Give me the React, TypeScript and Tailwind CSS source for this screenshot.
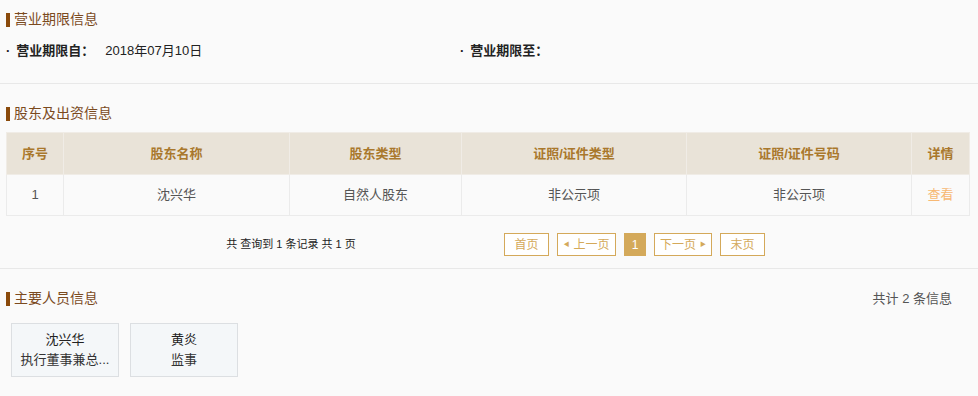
import React from "react";

const font = { fontFamily: '"Liberation Sans", "Noto Sans CJK SC", sans-serif' };

const SectionTitle: React.FC<{ title: string; right?: string }> = ({ title, right }) => (
  <div className="flex items-center justify-between pr-[26px]">
    <div className="flex items-center">
      <span className="inline-block w-[4px] h-[14px] bg-[#8a4a0b]" />
      <span className="ml-[4px] text-[14px] text-[#7b4a1e]">{title}</span>
    </div>
    {right && <span className="text-[13px] text-[#555]">{right}</span>}
  </div>
);

const columns = [
  { name: "序号", w: "w-[57px]" },
  { name: "股东名称", w: "w-[226px]" },
  { name: "股东类型", w: "w-[172px]" },
  { name: "证照/证件类型", w: "w-[225px]" },
  { name: "证照/证件号码", w: "w-[225px]" },
  { name: "详情", w: "w-[58px]" },
];

const row = ["1", "沈兴华", "自然人股东", "非公示项", "非公示项"];

const people = [
  { name: "沈兴华", role: "执行董事兼总..." },
  { name: "黄炎", role: "监事" },
];

const PageBtn: React.FC<{ children: React.ReactNode; w: string }> = ({ children, w }) => (
  <button
    className={`${w} h-[23px] border border-[#d4a95a] text-[#d4a95a] text-[12px] flex items-center justify-center bg-white`}
  >
    {children}
  </button>
);

const App: React.FC = () => {
  return (
    <div className="w-[978px] h-[396px] bg-[#fafafa] overflow-hidden" style={font}>
      <div className="pl-[6px] pt-[9px]">
        <SectionTitle title="营业期限信息" />
        <div className="flex items-center h-[20px] mt-[11px] text-[13px] text-[#222]">
          <div className="w-[454px] flex items-center">
            <span className="font-bold">·</span>
            <span className="font-bold ml-[6px]">营业期限自：</span>
            <span className="ml-[11px]">2018年07月10日</span>
          </div>
          <div className="flex items-center">
            <span className="font-bold">·</span>
            <span className="font-bold ml-[6px]">营业期限至：</span>
          </div>
        </div>
      </div>
      <div className="mt-[22px] border-t border-[#e8e8e8]" />

      <div className="pl-[6px] pt-[19px]">
        <SectionTitle title="股东及出资信息" />
        <table className="mt-[8px] border-collapse text-[13px]">
          <thead>
            <tr className="h-[42px] bg-[#e9e3d8]">
              {columns.map((c) => (
                <th
                  key={c.name}
                  className={`${c.w} border border-[#f0ece6] font-bold text-[#a9782c] text-center p-0`}
                >
                  {c.name}
                </th>
              ))}
            </tr>
          </thead>
          <tbody>
            <tr className="h-[41px] bg-[#fafafa]">
              {row.map((v, i) => (
                <td key={i} className="border border-[#ebebeb] text-center text-[#555] p-0">
                  {v}
                </td>
              ))}
              <td className="border border-[#ebebeb] text-center text-[#f7b873] p-0">查看</td>
            </tr>
          </tbody>
        </table>
        <div className="flex items-center h-[23px] mt-[17px]">
          <div className="w-[498px] text-center text-[11px] text-[#222] pl-[72px]">共 查询到 1 条记录 共 1 页</div>
          <div className="flex items-center gap-[8px]">
            <PageBtn w="w-[45px]">首页</PageBtn>
            <PageBtn w="w-[59px]">
              <span className="text-[6px] mr-[4px]">◀</span>上一页
            </PageBtn>
            <button className="w-[22px] h-[23px] bg-[#d4a95a] text-white text-[12px] flex items-center justify-center">
              1
            </button>
            <PageBtn w="w-[58px]">
              下一页<span className="text-[6px] ml-[4px]">▶</span>
            </PageBtn>
            <PageBtn w="w-[45px]">末页</PageBtn>
          </div>
        </div>
      </div>
      <div className="mt-[12px] border-t border-[#e8e8e8]" />

      <div className="pl-[6px] pt-[19px]">
        <SectionTitle title="主要人员信息" right="共计 2 条信息" />
        <div className="flex gap-[11px] mt-[14px] pl-[5px]">
          {people.map((p) => (
            <div
              key={p.name}
              className="w-[108px] h-[54px] border border-[#dcdfe2] bg-[#f4f7f9] flex flex-col items-center justify-center text-[13px] text-[#222]"
            >
              <div className="leading-[20px]">{p.name}</div>
              <div className="leading-[20px] text-[#333]">{p.role}</div>
            </div>
          ))}
        </div>
      </div>
    </div>
  );
};

export default App;
